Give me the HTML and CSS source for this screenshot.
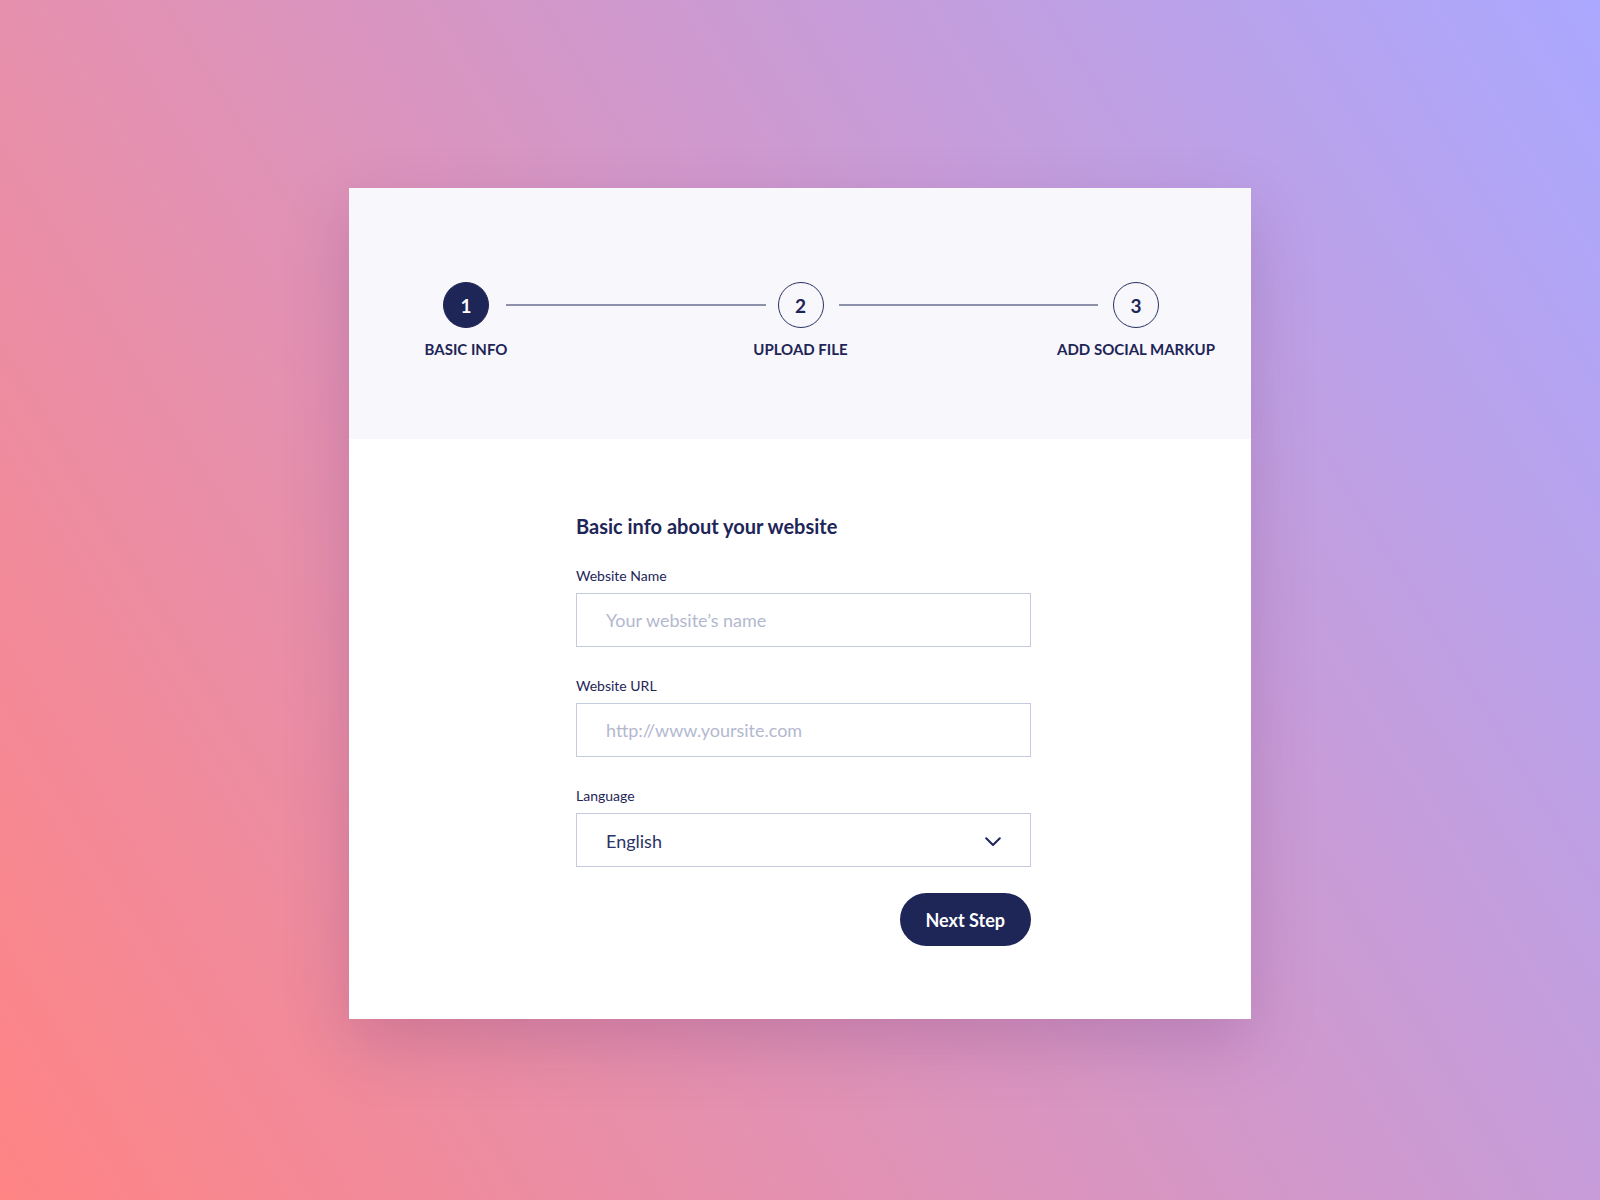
FILE: index.html
```html
<!DOCTYPE html>
<html lang="en">
<head>
<meta charset="utf-8">
<title>Basic info</title>
<link rel="stylesheet" href="styles.css">
</head>
<body>
  <main class="card">
    <header class="steps-band">
      <div class="stepper">
        <div class="step">
          <div class="step-circle active">1</div>
          <div class="step-label">BASIC INFO</div>
        </div>
        <div class="connector first"></div>
        <div class="step">
          <div class="step-circle">2</div>
          <div class="step-label">UPLOAD FILE</div>
        </div>
        <div class="connector"></div>
        <div class="step">
          <div class="step-circle">3</div>
          <div class="step-label">ADD SOCIAL MARKUP</div>
        </div>
      </div>
    </header>
    <section class="form-area">
      <form class="form">
        <h1 class="form-title">Basic info about your website</h1>
        <div class="field">
          <label class="field-label" for="name">Website Name</label>
          <input class="field-input" id="name" type="text" placeholder="Your website’s name">
        </div>
        <div class="field">
          <label class="field-label" for="url">Website URL</label>
          <input class="field-input" id="url" type="text" placeholder="http://www.yoursite.com">
        </div>
        <div class="field last">
          <div class="field-label">Language</div>
          <div class="select">
            <span class="select-value">English</span>
            <svg class="chevron" width="16" height="10" viewBox="0 0 16 10" aria-hidden="true">
              <polyline points="1.2,1.2 8,8 14.8,1.2" fill="none" stroke="#1e2557" stroke-width="2" stroke-linecap="round" stroke-linejoin="round"/>
            </svg>
          </div>
        </div>
        <div class="actions">
          <button class="btn-next" type="button">Next Step</button>
        </div>
      </form>
    </section>
  </main>
</body>
</html>
```
FILE: styles.css
```css
* { box-sizing: border-box; }

html, body { height: 100%; }

body {
  margin: 0;
  min-height: 100vh;
  font-family: Lato, "Noto Sans", "Liberation Sans", sans-serif;
  color: #1e2557;
  background: linear-gradient(58deg, #ff8484 0%, #d796c4 50%, #aaa8ff 100%);
  display: flex;
  justify-content: center;
  align-items: flex-start;
  padding-top: 188px;
}

.card {
  width: 902px;
  height: 831px;
  background: #ffffff;
  box-shadow: 0 24px 60px rgba(90, 40, 110, 0.22);
  display: flex;
  flex-direction: column;
}

.steps-band {
  height: 251px;
  background: #f8f7fc;
  padding: 94px 0 0 94px;
}

.stepper {
  width: 716px;
  display: flex;
  align-items: flex-start;
}

.step {
  width: 46px;
  flex: none;
  display: flex;
  flex-direction: column;
  align-items: center;
}

.step-circle {
  width: 46px;
  height: 46px;
  border-radius: 50%;
  border: 1px solid #2a3163;
  display: flex;
  align-items: center;
  justify-content: center;
  font-size: 19px;
  font-weight: 700;
  color: #1e2557;
  background: transparent;
}

.step-circle.active {
  background: #1e2557;
  border-color: #1e2557;
  color: #ffffff;
}

.step-label {
  margin-top: 12px;
  white-space: nowrap;
  font-size: 15px;
  line-height: 18px;
  font-weight: 700;
  color: #1e2557;
}

.connector {
  flex: 1;
  height: 2px;
  margin: 22px 15px 0;
  background: #8d91ac;
}

.connector.first {
  margin-left: 17px;
  margin-right: 12px;
}

.form-area {
  flex: 1;
  padding: 75px 220px 0 227px;
}

.form {
  width: 455px;
  display: flex;
  flex-direction: column;
}

.form-title {
  margin: 0 0 29px;
  font-size: 20px;
  line-height: 24px;
  font-weight: 700;
  color: #1e2557;
}

.field {
  display: flex;
  flex-direction: column;
  margin-bottom: 30px;
}

.field.last { margin-bottom: 26px; }

.field-label {
  display: block;
  font-size: 14px;
  line-height: 17px;
  margin-bottom: 9px;
  color: #1e2557;
}

.field-input,
.select {
  width: 100%;
  height: 54px;
  border: 1px solid #c6cadd;
  border-radius: 0;
  background: #ffffff;
  padding: 0 29px;
  font-family: Lato, "Noto Sans", "Liberation Sans", sans-serif;
  font-size: 18px;
  color: #2b3266;
  outline: none;
}

.field-input::placeholder { color: #b3b8cf; opacity: 1; }

.select {
  display: flex;
  align-items: center;
  justify-content: space-between;
}

.select-value { color: #2b3266; margin-top: 1px; }

.chevron { display: block; flex: none; margin-top: 3px; }

.actions {
  display: flex;
  justify-content: flex-end;
}

.btn-next {
  height: 53px;
  padding: 0 26px;
  border: none;
  border-radius: 27px;
  background: #1e2557;
  color: #ffffff;
  font-family: Lato, "Noto Sans", "Liberation Sans", sans-serif;
  font-size: 18px;
  font-weight: 700;
  cursor: pointer;
}
```
